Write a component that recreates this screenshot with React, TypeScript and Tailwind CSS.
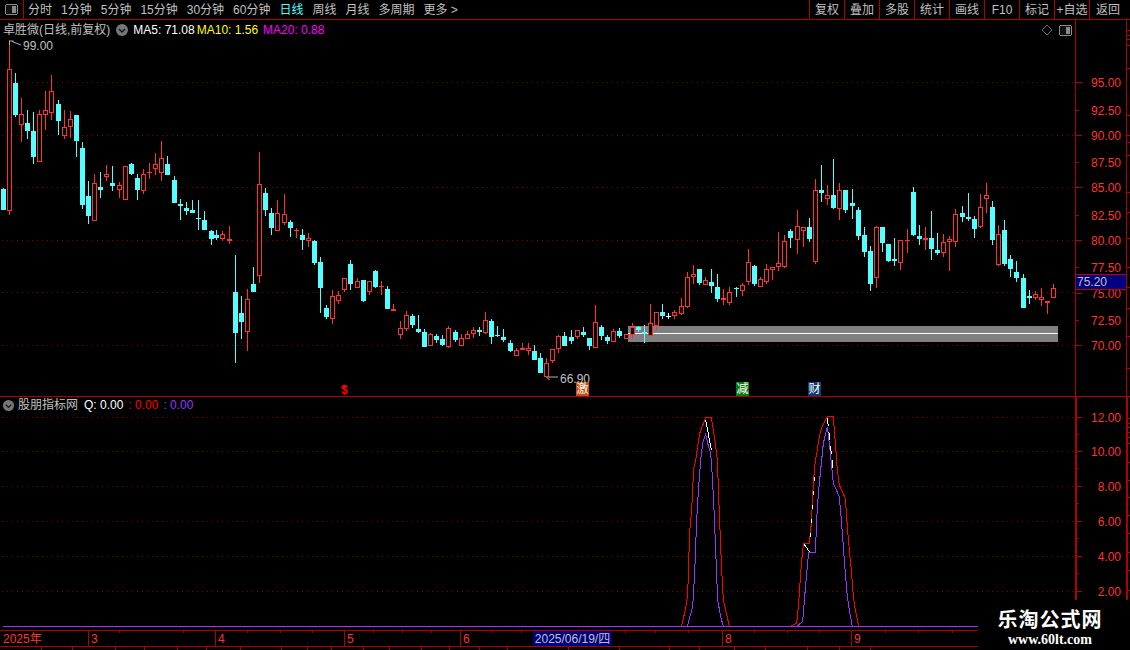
import { clsx } from "clsx";

type Candle = [number, number, number, number, number, "r" | "c" | "w"];

const candles: Candle[] = [
  [3.5, 189, 210, 188, 210, "c"], [9.5, 69, 211, 40, 215, "r"], [15.5, 83, 115, 73, 117, "c"], [21.5, 114, 125, 98, 142, "r"],
  [27.5, 123, 131, 110, 139, "c"], [33.5, 131, 157, 112, 164, "c"], [39.5, 114, 162, 110, 162, "r"], [45.5, 110, 115, 91, 130, "r"],
  [51.5, 91, 113, 75, 120, "r"], [58.5, 104, 121, 100, 135, "c"], [64.5, 127, 136, 110, 139, "r"], [70.5, 119, 127, 111, 138, "r"],
  [76.5, 115, 141, 115, 157, "c"], [82.5, 148, 205, 142, 209, "c"], [88.5, 196, 216, 181, 224, "c"], [94.5, 183, 221, 174, 221, "r"],
  [100.5, 187, 190, 172, 198, "c"], [106.5, 174, 177, 165, 181, "r"], [112.5, 183, 186, 166, 191, "c"], [119.5, 185, 190, 182, 198, "r"],
  [125.5, 166, 200, 166, 200, "r"], [131.5, 164, 174, 163, 175, "c"], [137.5, 178, 190, 174, 200, "c"], [143.5, 174, 191, 169, 194, "r"],
  [149.5, 172, 173, 163, 179, "r"], [155.5, 164, 169, 153, 175, "r"], [161.5, 158, 173, 141, 181, "r"], [167.5, 164, 175, 156, 175, "c"],
  [174.5, 180, 203, 176, 203, "c"], [180.5, 204, 206, 199, 220, "c"], [186.5, 208, 211, 202, 215, "c"], [192.5, 210, 213, 200, 213, "c"],
  [198.5, 218, 219, 200, 230, "c"], [204.5, 220, 230, 211, 230, "c"], [211.5, 231, 239, 230, 245, "c"], [216.5, 235, 238, 230, 240, "c"],
  [222.5, 234, 239, 231, 241, "r"], [229.5, 239, 241, 226, 244, "r"], [235.5, 292, 333, 255, 363, "c"], [241.5, 313, 322, 296, 339, "c"],
  [247.5, 299, 332, 289, 351, "r"], [253.5, 284, 292, 267, 292, "c"], [259.5, 184, 276, 152, 283, "r"], [265.5, 193, 210, 188, 216, "c"],
  [271.5, 213, 228, 208, 235, "c"], [277.5, 213, 231, 200, 231, "r"], [284.5, 214, 223, 194, 225, "r"], [290.5, 222, 228, 220, 237, "c"],
  [296.5, 230, 231, 228, 238, "r"], [302.5, 235, 240, 229, 250, "c"], [308.5, 238, 241, 233, 247, "r"], [314.5, 241, 263, 240, 265, "c"],
  [320.5, 262, 288, 257, 313, "c"], [326.5, 308, 317, 305, 319, "c"], [332.5, 296, 319, 290, 324, "r"], [338.5, 295, 301, 291, 304, "r"],
  [344.5, 278, 290, 278, 292, "r"], [350.5, 264, 284, 260, 290, "c"], [357.5, 281, 288, 278, 288, "r"], [363.5, 280, 301, 280, 302, "c"],
  [369.5, 281, 292, 281, 295, "r"], [375.5, 271, 287, 270, 288, "c"], [381.5, 286, 287, 281, 295, "r"], [387.5, 289, 309, 286, 309, "c"],
  [393.5, 309, 311, 304, 311, "r"], [400.5, 328, 335, 321, 339, "r"], [406.5, 315, 329, 311, 331, "r"], [412.5, 316, 325, 314, 328, "c"],
  [418.5, 329, 332, 315, 333, "c"], [424.5, 332, 347, 329, 347, "c"], [430.5, 334, 346, 333, 346, "r"], [436.5, 336, 340, 334, 343, "c"],
  [442.5, 339, 345, 335, 346, "c"], [448.5, 328, 347, 326, 348, "r"], [455.5, 332, 340, 330, 342, "c"], [461.5, 338, 346, 334, 346, "r"],
  [467.5, 334, 339, 331, 339, "r"], [473.5, 330, 334, 327, 338, "r"], [479.5, 330, 332, 327, 336, "c"], [485.5, 320, 333, 312, 334, "r"],
  [491.5, 321, 337, 319, 344, "c"], [497.5, 335, 336, 326, 337, "c"], [503.5, 337, 340, 329, 342, "c"], [510.5, 343, 351, 340, 352, "c"],
  [516.5, 350, 356, 348, 356, "r"], [522.5, 348, 350, 343, 350, "r"], [528.5, 348, 351, 343, 355, "r"], [534.5, 351, 360, 345, 360, "c"],
  [540.5, 358, 373, 353, 373, "c"], [546.5, 363, 377, 358, 377, "r"], [552.5, 349, 361, 349, 363, "r"], [558.5, 336, 349, 335, 353, "r"],
  [564.5, 336, 346, 332, 346, "c"], [571.5, 337, 341, 330, 344, "c"], [577.5, 330, 337, 330, 339, "r"], [583.5, 332, 335, 327, 337, "c"],
  [589.5, 338, 346, 338, 350, "c"], [595.5, 322, 348, 305, 348, "r"], [601.5, 327, 336, 325, 340, "c"], [607.5, 337, 341, 335, 344, "c"],
  [613.5, 331, 342, 329, 342, "r"], [619.5, 331, 336, 328, 338, "c"], [626.5, 334, 339, 334, 339, "r"], [632.5, 327, 335, 323, 339, "r"],
  [638.5, 327, 330, 326, 332, "c"], [644.5, 332, 334, 325, 343, "c"], [650.5, 323, 336, 304, 336, "r"], [656.5, 312, 326, 312, 330, "r"],
  [662.5, 312, 316, 304, 319, "c"], [668.5, 316, 317, 313, 319, "w"], [674.5, 312, 316, 310, 319, "r"], [681.5, 306, 314, 298, 315, "r"],
  [687.5, 277, 307, 272, 308, "r"], [693.5, 274, 277, 265, 284, "r"], [699.5, 269, 283, 269, 285, "c"], [705.5, 280, 285, 277, 285, "r"],
  [711.5, 282, 286, 269, 293, "c"], [717.5, 287, 299, 274, 302, "c"], [723.5, 298, 300, 289, 305, "r"], [729.5, 292, 303, 287, 305, "r"],
  [736.5, 288, 289, 287, 297, "c"], [742.5, 285, 291, 283, 296, "r"], [748.5, 262, 282, 249, 285, "r"], [754.5, 266, 284, 265, 286, "c"],
  [760.5, 279, 287, 277, 287, "r"], [766.5, 269, 282, 264, 284, "r"], [772.5, 267, 270, 267, 280, "r"], [778.5, 263, 267, 232, 271, "r"],
  [784.5, 241, 267, 235, 268, "r"], [790.5, 231, 238, 229, 248, "c"], [797.5, 226, 240, 210, 254, "r"], [803.5, 227, 231, 227, 247, "r"],
  [809.5, 227, 239, 218, 242, "c"], [815.5, 190, 262, 179, 264, "r"], [821.5, 190, 193, 165, 202, "c"], [827.5, 195, 199, 185, 205, "r"],
  [833.5, 195, 208, 159, 209, "c"], [839.5, 190, 209, 183, 220, "r"], [845.5, 190, 210, 190, 213, "c"], [852.5, 203, 206, 189, 219, "c"],
  [858.5, 210, 236, 207, 240, "c"], [864.5, 235, 252, 227, 257, "c"], [870.5, 251, 284, 246, 291, "c"], [876.5, 227, 278, 226, 288, "r"],
  [882.5, 227, 243, 227, 252, "c"], [888.5, 244, 261, 244, 262, "c"], [894.5, 259, 261, 238, 266, "c"], [900.5, 240, 263, 240, 270, "r"],
  [907.5, 240, 241, 229, 253, "r"], [913.5, 192, 235, 187, 236, "c"], [919.5, 236, 239, 225, 245, "c"], [925.5, 238, 240, 227, 250, "r"],
  [931.5, 238, 249, 211, 260, "c"], [937.5, 250, 253, 233, 255, "c"], [943.5, 242, 253, 234, 257, "r"], [949.5, 239, 242, 236, 271, "r"],
  [955.5, 214, 242, 209, 247, "r"], [962.5, 213, 217, 206, 222, "c"], [968.5, 217, 219, 193, 221, "c"], [974.5, 219, 229, 216, 238, "c"],
  [980.5, 207, 227, 194, 228, "r"], [986.5, 195, 199, 183, 213, "r"], [992.5, 207, 240, 201, 245, "c"], [998.5, 234, 265, 225, 266, "r"],
  [1004.5, 230, 264, 220, 266, "c"], [1010.5, 259, 269, 255, 277, "c"], [1016.5, 272, 278, 261, 282, "c"], [1023.5, 278, 308, 274, 308, "c"],
  [1029.5, 296, 298, 290, 304, "c"], [1035.5, 294, 298, 291, 300, "r"], [1041.5, 297, 300, 288, 306, "r"], [1047.5, 301, 303, 301, 314, "r"],
  [1053.5, 288, 298, 284, 298, "r"],
];

const upperGrid = [82, 135, 187, 240, 292, 345];
const lowerGrid = [417, 451, 486, 521, 556, 591];

const upperLabels = [
  ["95.00", 82, true], ["92.50", 110, false], ["90.00", 135, true], ["87.50", 162, false], ["85.00", 187, true], ["82.50", 215, false],
  ["80.00", 240, true], ["77.50", 267, false], ["75.00", 293, true], ["72.50", 320, false], ["70.00", 345, true],
] as const;
const lowerLabels = [["12.00", 417], ["10.00", 451], ["8.00", 486], ["6.00", 521], ["4.00", 556], ["2.00", 591]] as const;

const upperRail = [30, 35, 39, 45, 68, 115, 135, 142, 155, 192, 212, 238, 267, 287, 308, 336, 368];
const lowerRail = [418, 423, 427, 432, 437, 443, 462, 480, 497, 515, 533, 552, 570, 590];
const lowerMinor = [434, 468, 503, 538, 573];

const tabs = ["分时", "1分钟", "5分钟", "15分钟", "30分钟", "60分钟", "日线", "周线", "月线", "多周期"];
const actions = ["复权", "叠加", "多股", "统计", "画线", "F10", "标记", "+自选"];

// traced from the indicator pane, page pixels relative to x=670 y=400 at 3x
const toPts = (p: number[][]) => p.map(([x, y]) => `${670 + x / 3},${400 + y / 3}`).join(" ");
const redLine = toPts([
  [35, 677], [47, 625], [53, 585], [59, 395], [65, 330], [71, 205], [77, 180], [89, 100], [107, 52], [124, 52], [136, 130], [142, 180],
  [148, 340], [154, 490], [160, 600], [178, 679],
]);
const redLine2 = toPts([
  [362, 679], [380, 670], [386, 610], [392, 520], [398, 450], [402, 430], [418, 430], [424, 370], [430, 250], [436, 180], [442, 150],
  [448, 110], [454, 85], [472, 50], [490, 50], [496, 130], [502, 210], [508, 255], [526, 295], [532, 380], [538, 450], [544, 510],
  [550, 590], [556, 630], [566, 679],
]);
const purpleLine = toPts([
  [52, 679], [68, 620], [74, 520], [80, 360], [86, 260], [92, 180], [98, 130], [107, 103], [113, 130], [122, 160], [127, 230], [133, 350],
  [139, 500], [143, 600], [152, 650], [160, 679], [380, 679], [398, 665], [404, 590], [410, 520], [416, 458], [436, 458], [442, 320],
  [448, 250], [454, 190], [460, 130], [472, 80], [478, 130], [484, 190], [490, 250], [508, 290], [514, 360], [520, 440], [526, 520],
  [532, 590], [538, 630], [547, 679],
]);

const monthMarks = [
  { x: 88, label: "3" }, { x: 215, label: "4" }, { x: 344, label: "5" }, { x: 460, label: "6" }, { x: 722, label: "8" }, { x: 851, label: "9" },
];
const timeTicks = [119, 183, 247, 280, 312, 373, 402, 431, 491, 521, 625, 655, 688, 754, 787, 819, 885, 918, 952];
const stubCells = [42, 31, 43, 29, 33, 29, 34, 41, 26, 24, 32, 26, 32, 28, 30, 28, 61, 51, 50, 30, 35, 31, 42, 32, 31];

function Toggle() {
  return (
    <svg width="13" height="11" viewBox="0 0 13 11" shapeRendering="crispEdges">
      <rect x="0.5" y="0.5" width="12" height="10" rx="2" fill="#111" stroke="#8a8a8a" />
      <rect x="7" y="2" width="4" height="7" fill="#8a8a8a" />
    </svg>
  );
}

function Chevron({ size = 12 }: { size?: number }) {
  return (
    <svg width={size} height={size} viewBox="0 0 12 12">
      <circle cx="6" cy="6" r="6" fill="#777" />
      <path d="M3 5l3 3 3-3" fill="none" stroke="#111" strokeWidth="1.4" />
    </svg>
  );
}

function Candles() {
  return (
    <g shapeRendering="crispEdges">
      {candles.map(([x, top, bot, wt, wb, kind]) => {
        const color = kind === "r" ? "#ff3232" : kind === "c" ? "#54ffff" : "#ffffff";
        return (
          <g key={x}>
            <line x1={x} x2={x} y1={wt} y2={wb} stroke={color} />
            {kind === "r" && bot - top > 2 ? (
              <rect x={x - 2} y={top + 0.5} width={4} height={bot - top - 1} fill="#000" stroke={color} />
            ) : (
              <rect x={x - 2.5} y={top} width={5} height={Math.max(bot - top, 1)} fill={color} />
            )}
          </g>
        );
      })}
    </g>
  );
}

function Badge({ text, className }: { text: string; className: string }) {
  return (
    <span className={clsx("absolute top-[362px] flex h-[14px] w-[13px] items-center justify-center text-[12px] leading-none text-white", className)}>
      {text}
    </span>
  );
}

export default function App() {
  return (
    <div className="relative flex h-[650px] w-[1130px] flex-col overflow-hidden bg-black font-['Liberation_Sans','Noto_Sans_CJK_SC',sans-serif] text-[12px] leading-none text-[#c0c0c0]">
      {/* top toolbar */}
      <div className="flex h-[20px] items-stretch border-b border-[#b00000]">
        <div className="flex w-[24px] items-center justify-center border-r border-[#b00000] pr-[1px]">
          <Toggle />
        </div>
        <div className="flex flex-1 items-center gap-[9px] pl-[4px]">
          {tabs.map((t) => (
            <span key={t} className={t === "日线" ? "text-[#54ffff]" : ""}>
              {t}
            </span>
          ))}
          <span>更多 &gt;</span>
        </div>
        {actions.map((a) => (
          <div key={a} className="flex w-[35px] items-center justify-center border-l border-[#b00000]">
            {a}
          </div>
        ))}
        <div className="flex w-[41px] items-center justify-center border-l border-[#b00000] pr-[4px]">返回</div>
      </div>

      {/* price pane */}
      <div className="flex h-[377px] border-b border-[#b00000]">
        <div className="relative w-[1075px]">
          <svg className="block h-full w-full" viewBox="0 20 1075 376">
            {upperGrid.map((y) => (
              <line key={y} x1="2" x2="1075" y1={y + 0.5} y2={y + 0.5} stroke="#8c0000" strokeDasharray="1 4" shapeRendering="crispEdges" />
            ))}
            <g shapeRendering="crispEdges">
              <rect x="628" y="326" width="430" height="16" fill="#808080" />
              <rect x="628" y="333" width="430" height="1" fill="#ffffff" />
            </g>
            <Candles />
            <path d="M21 45L12 41.5M9.5 41h4M9.5 41v4M548 377h10M546.5 377l3 3" fill="none" stroke="#b0b0b0" />
            <path d="M341 388l3-3 3 3z" fill="#ff0000" />
          </svg>
          <div className="absolute left-[3px] top-0 flex h-[19px] items-center">
            <span>卓胜微(日线,前复权)</span>
            <span className="ml-[6px] mr-[5px]">
              <Chevron />
            </span>
            <span className="text-white">MA5: 71.08</span>
            <span className="ml-[2px] text-[#ffff00]">MA10: 1.56</span>
            <span className="ml-[5px] text-[#ff00ff]">MA20: 0.88</span>
          </div>
          <div className="absolute right-[3px] top-[4px] flex items-center gap-[6px]">
            <svg width="12" height="12" viewBox="0 0 12 12">
              <path d="M6 1l5 5-5 5-5-5z" fill="none" stroke="#666" />
            </svg>
            <Toggle />
          </div>
          <span className="absolute left-[23px] top-[20px]">99.00</span>
          <span className="absolute left-[560px] top-[353px]">66.90</span>
          <span className="absolute left-[341px] top-[364px] font-bold text-[#ff0000]">$</span>
          <Badge text="激" className="left-[576px] bg-[#c4500f]" />
          <Badge text="减" className="left-[736px] bg-[#0a7d12]" />
          <Badge text="财" className="left-[808px] bg-[#0c3d70]" />
        </div>
        <div className="relative w-[51px] border-l border-[#b00000]">
          {upperLabels.map(([label, y, major]) => (
            <div key={label}>
              <div className={clsx("absolute left-0 h-px bg-[#b00000]", major ? "w-[6px]" : "w-[3px]")} style={{ top: y - 20 }} />
              <span className="absolute right-[5px] -translate-y-1/2 text-[#ff3232]" style={{ top: y - 19 }}>
                {label}
              </span>
            </div>
          ))}
          <div className="absolute inset-x-0 top-[254px] flex h-[16px] items-center border-y border-[#c00000] bg-[#000080] pl-[1px]">75.20</div>
        </div>
        <div className="relative w-[4px] border-l border-[#b00000]">
          {upperRail.map((y) => (
            <div key={y} className="absolute left-0 h-px w-[3px] bg-[#b00000]" style={{ top: y - 20 }} />
          ))}
        </div>
      </div>

      {/* indicator pane */}
      <div className="flex h-[233px]">
        <div className="relative w-[1075px]">
          <svg className="block h-full w-full overflow-visible" viewBox="0 397 1075 233" fill="none" shapeRendering="crispEdges">
            {lowerGrid.map((y) => (
              <line key={y} x1="2" x2="1075" y1={y + 0.5} y2={y + 0.5} stroke="#8c0000" strokeDasharray="1 4" />
            ))}
            <polyline points={redLine} stroke="#ff0000" />
            <polyline points={redLine2} stroke="#ff0000" />
            <polyline points={purpleLine} stroke="#9933ff" />
            <line x1="3" x2="978" y1="626.5" y2="626.5" stroke="#9933ff" />
            <polyline points={toPts([[107, 60], [124, 150]])} stroke="#ffffff" />
            <polyline points={toPts([[402, 432], [418, 455]])} stroke="#ffffff" />
            <polyline points={toPts([[420, 410], [436, 205]])} stroke="#ffffff" strokeDasharray="4 10" />
            <polyline points={toPts([[472, 55], [490, 215]])} stroke="#ffffff" strokeDasharray="8 6" />
          </svg>
          <div className="absolute left-[3px] top-[2px] flex h-[12px] items-center">
            <Chevron size={11} />
            <span className="ml-[4px]">股朋指标网</span>
            <span className="ml-[6px] text-white">Q: 0.00</span>
            <span className="ml-[5px] text-[#ff0000]">: 0.00</span>
            <span className="ml-[5px] text-[#9933ff]">: 0.00</span>
          </div>
        </div>
        <div className="relative w-[51px] border-l-2 border-[#b00000]">
          {lowerLabels.map(([label, y]) => (
            <div key={label}>
              <div className="absolute left-0 h-px w-[5px] bg-[#b00000]" style={{ top: y - 397 }} />
              <span className="absolute right-[5px] -translate-y-1/2 text-[#ff3232]" style={{ top: y - 396 }}>
                {label}
              </span>
            </div>
          ))}
          {lowerMinor.map((y) => (
            <div key={y} className="absolute left-0 h-px w-[2px] bg-[#b00000]" style={{ top: y - 397 }} />
          ))}
        </div>
        <div className="relative w-[4px] border-l-2 border-[#b00000]">
          {lowerRail.map((y) => (
            <div key={y} className="absolute left-0 h-px w-[2px] bg-[#b00000]" style={{ top: y - 397 }} />
          ))}
        </div>
      </div>

      {/* time axis */}
      <div className="relative h-[17px] w-[978px] border-y border-[#b00000] text-[#ff3232]">
        <span className="absolute left-[3px] top-[2px]">2025年</span>
        {monthMarks.map((m) => (
          <div key={m.x} className="absolute top-0 flex h-full items-center border-l border-[#b00000] pl-[2px]" style={{ left: m.x }}>
            {m.label}
          </div>
        ))}
        {timeTicks.map((x) => (
          <div key={x} className="absolute top-0 h-[2px] w-px bg-[#b00000]" style={{ left: x }} />
        ))}
        <div className="absolute left-[533px] top-0 flex h-full w-[79px] items-center justify-center bg-[#000080] text-[#c0c0c0]">2025/06/19/四</div>
      </div>

      {/* cut off tab strip */}
      <div className="flex h-[3px] w-[978px]">
        {stubCells.map((w, i) => (
          <div key={i} className="h-full border-r border-[#b00000]" style={{ width: w }} />
        ))}
      </div>

      {/* site watermark */}
      <div className="absolute left-[978px] top-[600px] flex h-[50px] w-[152px] flex-col items-center bg-black pr-[8px] pt-[9px] text-white">
        <span className="text-[20px] font-bold leading-[22px] tracking-[1px]">乐淘公式网</span>
        <span className="mt-[2px] font-['Liberation_Serif',serif] text-[14px] font-bold leading-[14px]">www.60lt.com</span>
      </div>
    </div>
  );
}
